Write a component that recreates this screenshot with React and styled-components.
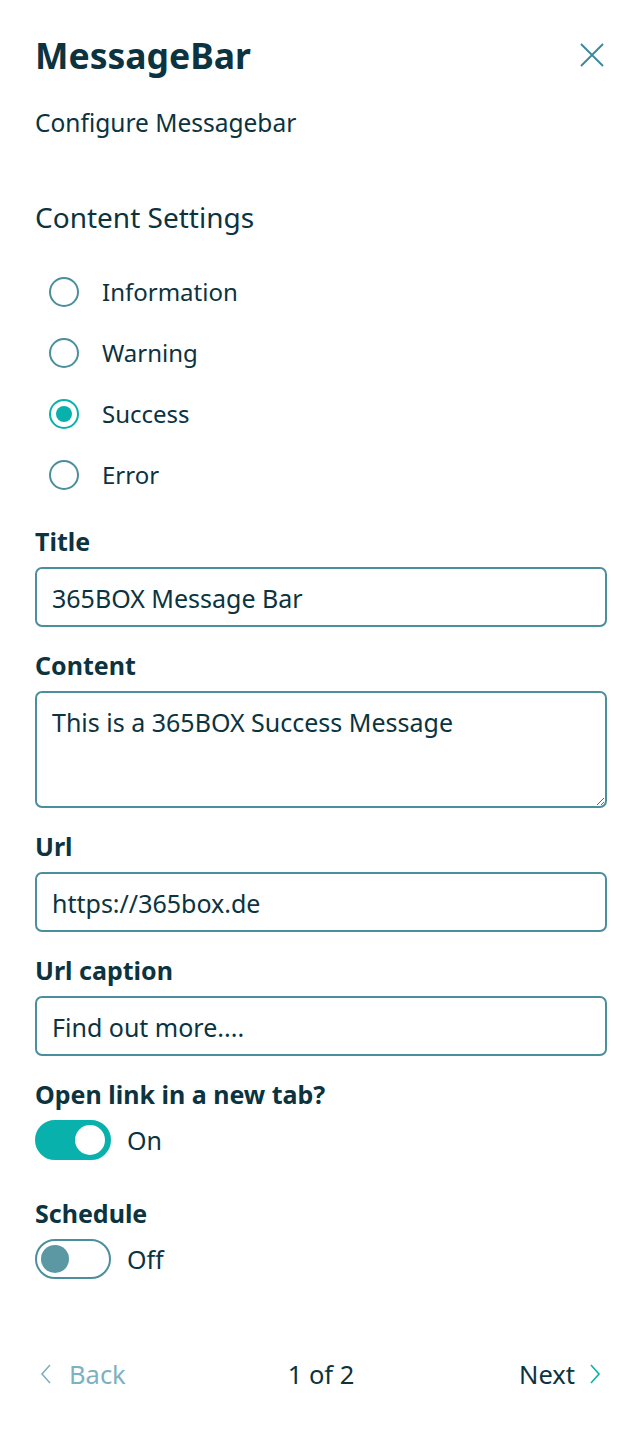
import React, { useState } from 'react'
import styled, { createGlobalStyle } from 'styled-components'

const GlobalStyle = createGlobalStyle`
  html, body {
    margin: 0;
    padding: 0;
    background: #ffffff;
  }
  body {
    font-family: "Noto Sans", "Open Sans", "Liberation Sans", sans-serif;
    color: #0b3340;
  }
`

const Panel = styled.div`
  width: 640px;
  min-height: 1435px;
  box-sizing: border-box;
  padding: 28px 33px 0 35px;
  display: flex;
  flex-direction: column;
`

const Header = styled.div`
  display: flex;
  align-items: center;
  justify-content: space-between;
`

const Heading = styled.h1`
  margin: 0;
  font-size: 35.5px;
  font-weight: 700;
  line-height: 54px;
`

const CloseButton = styled.button`
  border: none;
  background: transparent;
  padding: 0;
  width: 26px;
  height: 26px;
  display: flex;
  align-items: center;
  justify-content: center;
  cursor: pointer;
  margin-right: 2px;
`

const Subtitle = styled.p`
  margin: 26px 0 0;
  font-size: 24.5px;
  line-height: 30px;
`

const SectionTitle = styled.h2`
  margin: 62px 0 0;
  font-size: 28px;
  font-weight: 400;
  line-height: 34px;
`

const RadioList = styled.div`
  display: flex;
  flex-direction: column;
  gap: 31px;
  margin: 43px 0 0 14px;
`

const RadioRow = styled.label`
  display: flex;
  align-items: center;
  gap: 23px;
  font-size: 24px;
  line-height: 30px;
  cursor: pointer;
`

const RadioCircle = styled.span`
  width: 26px;
  height: 26px;
  border-radius: 50%;
  border: 2px solid ${p => (p.$checked ? '#09b1ac' : '#4b8e9c')};
  display: flex;
  align-items: center;
  justify-content: center;
  flex-shrink: 0;

  &::after {
    content: '';
    display: ${p => (p.$checked ? 'block' : 'none')};
    width: 16px;
    height: 16px;
    border-radius: 50%;
    background: #09b1ac;
  }
`

const Field = styled.div`
  display: flex;
  flex-direction: column;
  margin-top: ${p => p.$top || 23}px;
`

const Label = styled.label`
  font-size: 25px;
  font-weight: 700;
  line-height: 30px;
  margin-bottom: 11px;
`

const TextInput = styled.input`
  box-sizing: border-box;
  width: 100%;
  height: 60px;
  border: 2px solid #4b8e9c;
  border-radius: 7px;
  padding: 2px 15px 0;
  font-family: inherit;
  font-size: 25px;
  color: #0b3340;
  background: #fff;
  outline: none;
`

const TextArea = styled.textarea`
  box-sizing: border-box;
  width: 100%;
  height: 117px;
  border: 2px solid #4b8e9c;
  border-radius: 7px;
  padding: 12px 15px;
  font-family: inherit;
  font-size: 25px;
  line-height: 34px;
  color: #0b3340;
  background: #fff;
  resize: vertical;
  outline: none;
`

const ToggleRow = styled.div`
  display: flex;
  align-items: center;
  gap: 16px;
  font-size: 25px;
`

const ToggleTrack = styled.button`
  box-sizing: border-box;
  width: 76px;
  height: 40px;
  border-radius: 20px;
  border: 2px solid ${p => (p.$on ? '#09b1ac' : '#4b8e9c')};
  background: ${p => (p.$on ? '#09b1ac' : '#ffffff')};
  padding: 0 4px;
  display: flex;
  align-items: center;
  justify-content: ${p => (p.$on ? 'flex-end' : 'flex-start')};
  cursor: pointer;

  &::after {
    content: '';
    width: ${p => (p.$on ? 30 : 28)}px;
    height: ${p => (p.$on ? 30 : 28)}px;
    border-radius: 50%;
    background: ${p => (p.$on ? '#ffffff' : '#5b98a4')};
  }
`

const Footer = styled.div`
  margin-top: 78px;
  display: grid;
  grid-template-columns: 1fr auto 1fr;
  align-items: center;
  font-size: 25.5px;
  line-height: 34px;
`

const NavButton = styled.button`
  border: none;
  background: transparent;
  font-family: inherit;
  font-size: 25.5px;
  display: flex;
  align-items: center;
  gap: ${p => (p.$next ? 14 : 17)}px;
  padding: 0;
  color: ${p => (p.$disabled ? '#7db1bf' : '#0b3340')};
  justify-self: ${p => (p.$next ? 'end' : 'start')};
  margin: ${p => (p.$next ? '0 6px 0 0' : '0 0 0 5px')};
  cursor: pointer;
`

const PageCount = styled.span`
  color: #0b3340;
`

const Chevron = ({ dir, color }) => (
  <svg width="12" height="22" viewBox="0 0 12 22" fill="none">
    <path
      d={dir === 'left' ? 'M10 2 L2 11 L10 20' : 'M2 2 L10 11 L2 20'}
      stroke={color}
      strokeWidth="1.6"
    />
  </svg>
)

const options = ['Information', 'Warning', 'Success', 'Error']

export default function App() {
  const [type, setType] = useState('Success')
  const [openNew, setOpenNew] = useState(true)
  const [schedule, setSchedule] = useState(false)

  return (
    <>
      <GlobalStyle />
      <Panel>
        <Header>
          <Heading>MessageBar</Heading>
          <CloseButton aria-label="Close">
            <svg width="24" height="24" viewBox="0 0 24 24">
              <path d="M1 1 L23 23 M23 1 L1 23" stroke="#3f8a9a" strokeWidth="2" />
            </svg>
          </CloseButton>
        </Header>
        <Subtitle>Configure Messagebar</Subtitle>

        <SectionTitle>Content Settings</SectionTitle>
        <RadioList>
          {options.map(o => (
            <RadioRow key={o} onClick={() => setType(o)}>
              <RadioCircle $checked={type === o} />
              {o}
            </RadioRow>
          ))}
        </RadioList>

        <Field $top={36}>
          <Label>Title</Label>
          <TextInput defaultValue="365BOX Message Bar" />
        </Field>
        <Field>
          <Label>Content</Label>
          <TextArea defaultValue="This is a 365BOX Success Message" />
        </Field>
        <Field>
          <Label>Url</Label>
          <TextInput defaultValue="https://365box.de" />
        </Field>
        <Field>
          <Label>Url caption</Label>
          <TextInput defaultValue="Find out more...." />
        </Field>

        <Field $top={23}>
          <Label>Open link in a new tab?</Label>
          <ToggleRow>
            <ToggleTrack $on={openNew} onClick={() => setOpenNew(!openNew)} />
            {openNew ? 'On' : 'Off'}
          </ToggleRow>
        </Field>
        <Field $top={38}>
          <Label>Schedule</Label>
          <ToggleRow>
            <ToggleTrack $on={schedule} onClick={() => setSchedule(!schedule)} />
            {schedule ? 'On' : 'Off'}
          </ToggleRow>
        </Field>

        <Footer>
          <NavButton $disabled>
            <Chevron dir="left" color="#7db1bf" />
            Back
          </NavButton>
          <PageCount>1 of 2</PageCount>
          <NavButton $next>
            Next
            <Chevron dir="right" color="#09b1ac" />
          </NavButton>
        </Footer>
      </Panel>
    </>
  )
}
